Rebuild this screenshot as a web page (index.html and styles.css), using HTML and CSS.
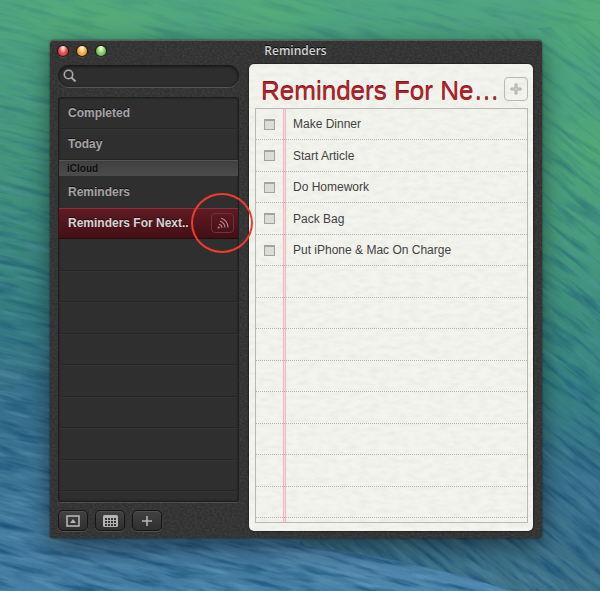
FILE: index.html
```html
<!DOCTYPE html>
<html lang="en">
<head>
    <meta charset="UTF-8">
    <meta name="viewport" content="width=device-width, initial-scale=1.0">
    <title>Reminders</title>
    <link rel="stylesheet" href="styles.css">
</head>
<body>

<!-- Desktop wallpaper -->
<svg class="wallpaper" viewBox="0 0 600 591" preserveAspectRatio="none" color-interpolation-filters="sRGB" aria-hidden="true">
    <defs>
        <linearGradient id="sea" x1="0" y1="0" x2="0" y2="1">
            <stop offset="0" stop-color="#4fa680"/>
            <stop offset="0.3" stop-color="#42937b"/>
            <stop offset="0.52" stop-color="#347d7f"/>
            <stop offset="0.7" stop-color="#376f8c"/>
            <stop offset="1" stop-color="#467ca4"/>
        </linearGradient>
        <linearGradient id="right" gradientUnits="userSpaceOnUse" x1="0" y1="0" x2="0" y2="591">
            <stop offset="0" stop-color="#4fa680"/>
            <stop offset="0.4" stop-color="#469c7c"/>
            <stop offset="0.65" stop-color="#358280"/>
            <stop offset="0.82" stop-color="#386f8c"/>
            <stop offset="1" stop-color="#3f7388"/>
        </linearGradient>
        <radialGradient id="glow">
            <stop offset="0" stop-color="#5cb868" stop-opacity="0.4"/>
            <stop offset="1" stop-color="#5cb868" stop-opacity="0"/>
        </radialGradient>
        <filter id="dark" x="0" y="0" width="1" height="1">
            <feTurbulence type="fractalNoise" baseFrequency="0.02 0.16" numOctaves="4" seed="8"/>
            <feColorMatrix values="0 0 0 0 0.08  0 0 0 0 0.3  0 0 0 0 0.45  2.4 0 0 0 -1.1"/>
        </filter>
        <filter id="light" x="0" y="0" width="1" height="1">
            <feTurbulence type="fractalNoise" baseFrequency="0.025 0.2" numOctaves="4" seed="21"/>
            <feColorMatrix values="0 0 0 0 0.45  0 0 0 0 0.68  0 0 0 0 0.78  2.4 0 0 0 -1.1"/>
        </filter>
        <linearGradient id="fade" x1="0" y1="0" x2="0" y2="1">
            <stop offset="0" stop-color="#fff" stop-opacity="0.2"/>
            <stop offset="0.4" stop-color="#fff" stop-opacity="0.5"/>
            <stop offset="1" stop-color="#fff" stop-opacity="0.9"/>
        </linearGradient>
        <mask id="deeper"><rect width="600" height="591" fill="url(#fade)"/></mask>
        <clipPath id="leftWave"><path d="M0 0H600V20L300 60V545Q420 560 510 591H0z"/></clipPath>
        <clipPath id="rightWave"><path d="M300 60L600 20V591H510Q420 560 300 545z"/></clipPath>
    </defs>
    <rect width="600" height="591" fill="url(#sea)"/>
    <path d="M300 60L600 20V591H510Q420 560 300 545z" fill="url(#right)"/>
    <path d="M250 545Q390 550 510 591H380z" fill="#6fa2cc" opacity="0.25"/>
    <ellipse cx="100" cy="20" rx="110" ry="40" fill="url(#glow)"/>
    <ellipse cx="270" cy="12" rx="70" ry="28" fill="url(#glow)"/>
    <ellipse cx="590" cy="20" rx="60" ry="50" fill="url(#glow)"/>
    <ellipse cx="590" cy="150" rx="50" ry="60" fill="url(#glow)"/>
    <g mask="url(#deeper)">
        <g clip-path="url(#leftWave)">
            <g transform="rotate(14)">
                <rect x="-100" y="-200" width="900" height="900" filter="url(#dark)"/>
                <rect x="-100" y="-200" width="900" height="900" filter="url(#light)" opacity="0.5"/>
            </g>
        </g>
        <g clip-path="url(#rightWave)">
            <g transform="rotate(38 550 300)">
                <rect x="0" y="-200" width="900" height="900" filter="url(#dark)"/>
                <rect x="0" y="-200" width="900" height="900" filter="url(#light)" opacity="0.35"/>
            </g>
        </g>
    </g>
</svg>

<main class="window">
    <svg class="grain" color-interpolation-filters="sRGB" aria-hidden="true">
        <filter id="leather" x="0" y="0" width="1" height="1">
            <feTurbulence type="fractalNoise" baseFrequency="0.4 0.6" numOctaves="2" seed="3"/>
            <feColorMatrix values="0 0 0 0 1  0 0 0 0 1  0 0 0 0 1  0.14 0 0 0 -0.04"/>
        </filter>
        <rect width="100%" height="100%" filter="url(#leather)"/>
    </svg>

    <header class="titlebar">
        <div class="lights">
            <button class="light red" aria-label="Close"></button>
            <button class="light yellow" aria-label="Minimize"></button>
            <button class="light green" aria-label="Zoom"></button>
        </div>
        <h1>Reminders</h1>
    </header>

    <div class="panes">
        <!-- Sidebar -->
        <aside class="sidebar">
            <label class="search">
                <svg width="14" height="14" viewBox="0 0 14 14" aria-hidden="true">
                    <circle cx="5.5" cy="5.5" r="4.2" fill="none" stroke="#aaa" stroke-width="1.6"/>
                    <path d="M8.6 8.6L12.5 12.5" stroke="#aaa" stroke-width="2"/>
                </svg>
                <input type="search" aria-label="Search">
            </label>

            <ul class="lists">
                <li class="smart"><a href="#">Completed</a></li>
                <li class="smart"><a href="#">Today</a></li>
                <li class="account">iCloud</li>
                <li class="plain"><a href="#">Reminders</a></li>
                <li class="selected">
                    <a href="#">Reminders For Next..</a>
                    <div class="share">
                        <button aria-label="Share list">
                            <svg width="14" height="14" viewBox="0 0 14 14" fill="none" stroke="#b98d92" stroke-width="1.1" aria-hidden="true">
                                <circle cx="2.6" cy="11.4" r="1" fill="#b98d92" stroke="none"/>
                                <path d="M3 8.2A4 4 0 0 1 6 11.8M4 5.2A7 7 0 0 1 9 11.6M5.2 2.2A10 10 0 0 1 12 11.4"/>
                            </svg>
                        </button>
                        <span class="ring"></span>
                    </div>
                </li>
                <li></li>
                <li></li>
                <li></li>
                <li></li>
                <li></li>
                <li></li>
                <li></li>
                <li></li>
                <li class="rest"></li>
            </ul>

            <div class="toolbar">
                <button aria-label="Hide sidebar">
                    <svg width="14" height="12" viewBox="0 0 14 12" aria-hidden="true">
                        <rect x="1" y="1" width="12" height="10" fill="none" stroke="#b5b5b5" stroke-width="1.6"/>
                        <path d="M4 8L7 4L10 8z" fill="#b5b5b5"/>
                    </svg>
                </button>
                <button aria-label="Show calendar">
                    <svg width="15" height="12" viewBox="0 0 15 12" aria-hidden="true">
                        <rect width="15" height="12" rx="1.5" fill="#b5b5b5"/>
                        <path d="M2 4H13M2 7H13M2 10H13" stroke="#333" stroke-width="2" stroke-dasharray="2 1"/>
                    </svg>
                </button>
                <button aria-label="Add list">
                    <svg width="12" height="12" viewBox="0 0 12 12" aria-hidden="true">
                        <path d="M6 1V11M1 6H11" stroke="#b5b5b5" stroke-width="1.6"/>
                    </svg>
                </button>
            </div>
        </aside>

        <!-- Notepad -->
        <section class="paper">
            <svg class="grain" color-interpolation-filters="sRGB" aria-hidden="true">
                <filter id="fibre" x="0" y="0" width="1" height="1">
                    <feTurbulence type="fractalNoise" baseFrequency="0.1 0.22" numOctaves="3" seed="5"/>
                    <feColorMatrix values="0 0 0 0 0.5  0 0 0 0 0.5  0 0 0 0 0.4  0.14 0 0 0 -0.05"/>
                </filter>
                <rect width="100%" height="100%" filter="url(#fibre)"/>
            </svg>
            <div class="heading">
                <h2>Reminders For Ne…</h2>
                <button class="add" aria-label="Add reminder">
                    <svg width="12" height="12" viewBox="0 0 12 12" aria-hidden="true">
                        <path d="M5 1H7V5H11V7H7V11H5V7H1V5H5z" fill="#cfcfca" stroke="#adada8"/>
                    </svg>
                </button>
            </div>
            <ul class="sheet">
                <li><input type="checkbox" id="r1"><label for="r1">Make Dinner</label></li>
                <li><input type="checkbox" id="r2"><label for="r2">Start Article</label></li>
                <li><input type="checkbox" id="r3"><label for="r3">Do Homework</label></li>
                <li><input type="checkbox" id="r4"><label for="r4">Pack Bag</label></li>
                <li><input type="checkbox" id="r5"><label for="r5">Put iPhone &amp; Mac On Charge</label></li>
                <li></li>
                <li></li>
                <li></li>
                <li></li>
                <li></li>
                <li></li>
                <li></li>
                <li></li>
            </ul>
        </section>
    </div>
</main>

</body>
</html>
```

FILE: styles.css
```css
* {
    box-sizing: border-box;
}

body {
    margin: 0;
    min-height: 100vh;
    font-family: "Liberation Sans", Arial, sans-serif;
    font-size: 12px;
    background-color: #3f8a80;
    position: relative;
    display: flow-root;
}

h1, h2, ul {
    margin: 0;
    padding: 0;
    font-weight: normal;
    list-style: none;
}

button {
    padding: 0;
    border: none;
    background: none;
    display: flex;
    align-items: center;
    justify-content: center;
    cursor: pointer;
}

a {
    color: inherit;
    text-decoration: none;
}

.wallpaper,
.grain {
    position: absolute;
    top: 0;
    left: 0;
    width: 100%;
    height: 100%;
    pointer-events: none;
}

/* Window */
.window {
    position: relative;
    margin: 40px 58px 53px 50px;
    padding: 0 9px 7px 8px;
    border-radius: 4px 4px 3px 3px;
    background-color: #2f2f2f;
    box-shadow: 0 8px 24px rgba(0, 0, 0, 0.5), 0 0 2px rgba(0, 0, 0, 0.6), inset 0 1px 0 #565656;
}

.titlebar {
    position: relative;
    height: 24px;
    padding-bottom: 2px;
    display: grid;
    grid-template-columns: 1fr auto 1fr;
    align-items: center;
}

.titlebar h1 {
    font-family: "Open Sans", sans-serif;
    font-size: 12px;
    font-weight: 600;
    line-height: 20px;
    color: #d6d6d6;
    text-shadow: 0 -1px 0 #000;
}

.lights {
    display: flex;
    gap: 9px;
}

.light {
    width: 10px;
    height: 10px;
    border-radius: 50%;
    box-shadow: 0 0 1px 1px #181818, 0 2px 0 #555;
}

.red {
    background: radial-gradient(ellipse at 50% 20%, #ffd5d0 10%, #e8504c 50%, #b91f24);
}

.yellow {
    background: radial-gradient(ellipse at 50% 20%, #fff0c8 10%, #f3b04a 50%, #c67d1c);
}

.green {
    background: radial-gradient(ellipse at 50% 20%, #e4fbcf 10%, #88ce68 50%, #4a9638);
}

.panes {
    position: relative;
    z-index: 0;
    display: grid;
    grid-template-columns: minmax(0, 181fr) minmax(0, 284fr);
    gap: 10px;
}

/* Sidebar */
.sidebar {
    display: flex;
    flex-direction: column;
    padding-top: 1px;
}

.search {
    display: flex;
    align-items: center;
    gap: 4px;
    height: 22px;
    padding: 0 8px 0 5px;
    border-radius: 11px;
    background-color: #2e2e2e;
    box-shadow: inset 0 1px 2px 1px #1a1a1a, 0 1px 0 #565656;
}

.search input {
    flex: 1;
    min-width: 0;
    border: none;
    outline: none;
    background: none;
    color: #ccc;
    font: inherit;
}

.lists {
    flex: 1;
    display: flex;
    flex-direction: column;
    margin: 10px 0 8px;
    padding: 1px 0;
    border-radius: 3px;
    background-color: #2f2f2f;
    box-shadow: inset 0 0 2px 1px #191919, 0 1px 0 #505050;
    font-weight: bold;
    color: #a6a6a6;
    text-shadow: 0 -1px 0 #111;
}

.lists li {
    display: flex;
    align-items: center;
    justify-content: space-between;
    height: 31px;
    margin: 0 1px;
    padding: 0 4px 0 9px;
    border-bottom: 1px solid #262626;
    box-shadow: 0 1px 0 #343434;
}

.lists li:nth-child(even) {
    height: 32px;
}

.lists li.smart {
    height: 31px;
}

.lists li.account {
    height: 16px;
    padding: 0 8px;
    border: none;
    background: linear-gradient(#3f3f3f, #4c4c4c);
    box-shadow: inset 0 1px 0 #565656;
    color: #0c0c0c;
    font-size: 10px;
    text-shadow: 0 1px 0 #555;
}

.lists .plain {
    border: none;
}

.lists .selected {
    background: linear-gradient(#611b24, #430f15);
    border-bottom-color: #260a0c;
    box-shadow: inset 0 1px 0 #87333b;
    color: #d9d3d3;
    white-space: nowrap;
}

.lists li.rest {
    flex: 1;
    height: auto;
    border: none;
    box-shadow: none;
}

.share {
    position: relative;
}

.share button {
    width: 23px;
    height: 20px;
    border: 1px solid #6b343d;
    border-radius: 4px;
}

/* Highlight ring around the share button */
.ring {
    position: absolute;
    top: -20px;
    left: -20px;
    width: 62px;
    height: 60px;
    border: 2px solid #f03a2e;
    border-radius: 50%;
    z-index: 2;
    pointer-events: none;
}

.toolbar {
    display: flex;
    gap: 7px;
}

.toolbar button {
    width: 30px;
    height: 21px;
    border: 1px solid #161616;
    border-radius: 5px;
    background: linear-gradient(#424242, #2f2f2f);
    box-shadow: inset 0 1px 0 #505050, 0 1px 0 #505050;
}

/* Notepad */
.paper {
    position: relative;
    z-index: -1;
    padding: 0 5px 8px 6px;
    border-radius: 5px;
    background-color: #f4f4ef;
    box-shadow: 0 0 2px #000;
}

.heading {
    position: relative;
    display: flex;
    align-items: center;
    justify-content: space-between;
    height: 44px;
    padding: 6px 0 0 6px;
}

.heading h2 {
    padding-top: 4px;
    font-size: 26px;
    line-height: 32px;
    color: #b0252b;
    text-shadow: 0 -1px 0 #7d1418;
    white-space: nowrap;
}

.add {
    width: 24px;
    height: 24px;
    border: 1px solid #b9b9b4;
    border-radius: 4px;
}

.sheet {
    position: relative;
    padding-bottom: 4px;
    border: 1px solid #b8b9b6;
    /* double margin rule */
    background: linear-gradient(90deg, #fab4c0 1px, #fbdcde 1px, #fbdcde 2px, #fab4c0 2px) 27px 0 / 3px 100% no-repeat;
}

.sheet li {
    display: flex;
    align-items: center;
    gap: 18px;
    height: 31px;
    padding-left: 8px;
    border-bottom: 1px dotted #b4b4b0;
}

.sheet li:nth-child(even) {
    height: 32px;
}

.sheet input {
    appearance: none;
    width: 11px;
    height: 11px;
    margin: 0;
    border: 1px solid #a3a39f;
    border-top: 2px solid #a3a39f;
    background-color: #dcdcd6;
}

.sheet input:checked {
    background-color: #9b9b96;
}

.sheet label {
    color: #414141;
    white-space: nowrap;
}
```
